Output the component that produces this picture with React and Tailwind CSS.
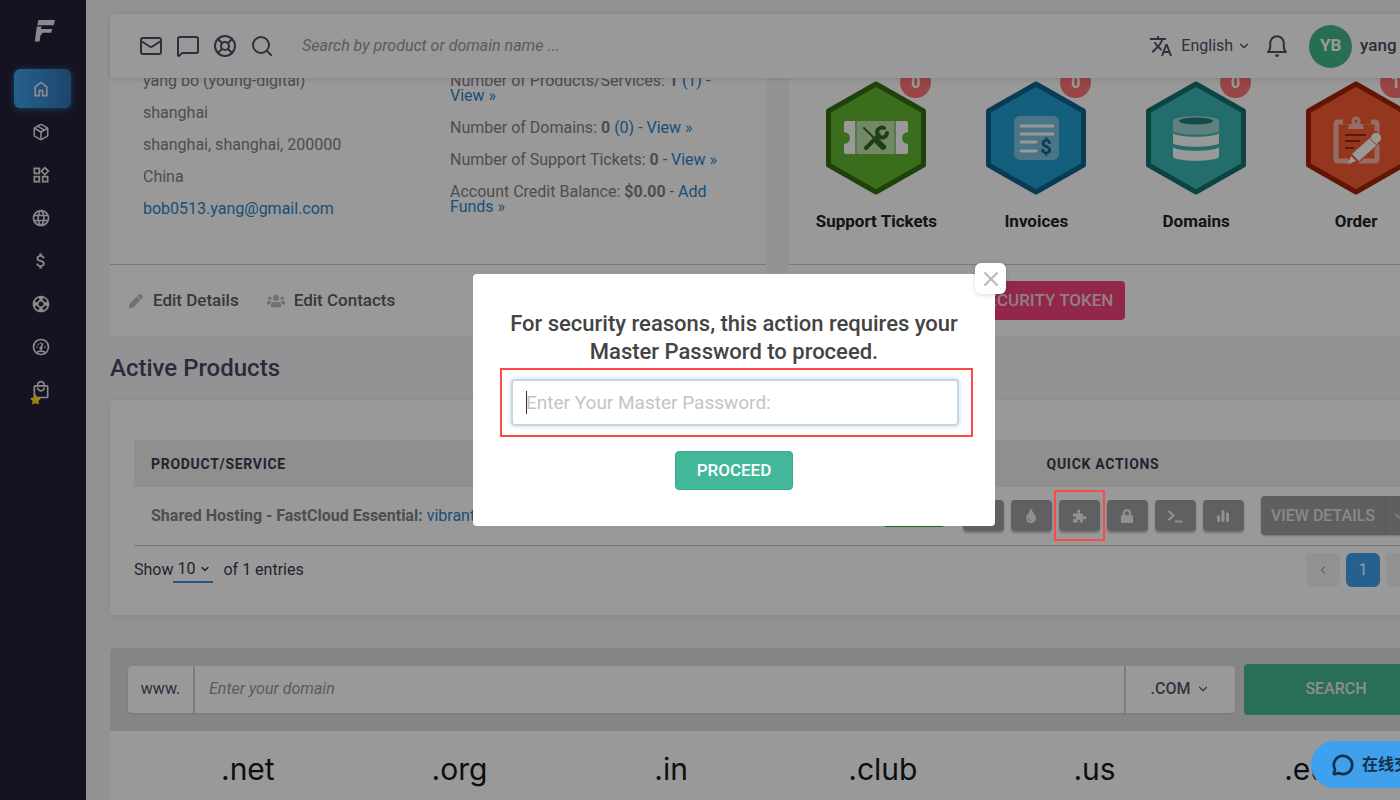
import React, { useState } from 'react';
import {
  ChevronDown,
  ChevronLeft,
  ChevronRight,
  LifeBuoy,
  Mail,
  MessageCircle,
  MessageSquare,
  Package,
  Search,
  X,
} from 'lucide-react';
import {
  MdAttachMoney,
  MdLanguage,
  MdOutlineLocalMall,
  MdOutlineSupport,
  MdOutlineWidgets,
  MdTranslate,
} from 'react-icons/md';
import { FaLock, FaPen, FaStar, FaTint, FaUsers } from 'react-icons/fa';

const HomeIcon = () => (
  <svg className="h-5 w-5" viewBox="0 -960 960 960" fill="currentColor">
    <path d="M240-200h120v-240h240v240h120v-360L480-740 240-560v360Zm-80 80v-480l320-240 320 240v480H520v-240h-80v240H160Z" />
  </svg>
);

const GaugeIcon = () => (
  <svg className="h-5 w-5" viewBox="0 0 24 24" fill="none" stroke="currentColor" strokeWidth="2">
    <circle cx="12" cy="12" r="9" />
    <path d="M7 18.500c2.500-2.200 7.500-2.200 10 0M12 13.500l2-6M6.500 12h1.500M16 12h1.500M8.200 8.200l1 1M11.500 6.500v1.500" />
    <circle cx="12" cy="13.500" r="1" fill="currentColor" />
  </svg>
);

const BellIcon = () => (
  <svg className="h-6 w-6" viewBox="0 0 24 24" fill="none" stroke="currentColor" strokeWidth="2" strokeLinejoin="round">
    <path d="M3 18h18c-1.600-1.300-2.200-2.800-2.200-5V9A6.800 6.800 0 0 0 5.200 9v4c0 2.200-.6 3.700-2.200 5z" />
    <path d="M9.500 20.500h5L12.800 23h-1.600z" fill="currentColor" stroke="none" />
  </svg>
);

const Logo = () => (
  <svg className="h-[22px] w-[22px]" viewBox="0 0 22 22" fill="currentColor">
    <path d="M4.500 0H21l-1.300 5.200H3.200zM2.800 6.600h4.800L6.900 9h11.300l-1 3.800H8.200l-.5 2H6.600L5.500 21.500H.8z" />
  </svg>
);

const Puzzle = () => (
  <svg className="h-4 w-4" viewBox="0 0 16 16" fill="currentColor">
    <path d="M2 5.500h4c.8 0 .9-.6.500-1.200C5.600 2.700 6.400 1.500 7.700 1.500s2.100 1.200 1.200 2.800c-.4.600-.3 1.200.5 1.200H12v2.600c0 .8.600.9 1.200.5 1.300-.8 2.300 0 2.300 1.200s-1 2-2.300 1.200c-.6-.4-1.200-.3-1.200.5v3H9.300c-.8 0-.8-.5-.5-1 .6-1.200 0-2-1-2s-1.700.8-1 2c.3.500.2 1-.5 1H2v-3c0-.7.500-.7 1-.4 1.200.6 2-.3 2-1.200s-.8-1.800-2-1.200c-.5.300-1 .2-1-.5z" />
  </svg>
);

const Terminal = () => (
  <svg className="h-4 w-4" viewBox="0 0 16 16" fill="none" stroke="currentColor" strokeWidth="2">
    <path d="M1.500 3l5 4.500-5 4.500M8 13.500h7.500" />
  </svg>
);

const Stats = () => (
  <svg className="h-4 w-4" viewBox="0 0 16 16" fill="currentColor">
    <rect x="2" y="7" width="3" height="7" rx="1.500" />
    <rect x="6.500" y="2" width="3" height="12" rx="1.500" />
    <rect x="11" y="4.500" width="3" height="9.500" rx="1.500" />
  </svg>
);

const Hexagon = ({ fill, edge, children }) => (
  <svg className="h-[114px] w-[102px]" viewBox="0 0 102 114">
    <path
      d="M51 3L98.500 30v54L51 111 3.500 84V30z"
      fill={fill}
      stroke={edge}
      strokeWidth="5"
      strokeLinejoin="round"
    />
    {children}
  </svg>
);

const TicketArt = () => (
  <Hexagon fill="#63b830" edge="#336f12">
    <path
      d="M21 40h60a2 2 0 0 1 2 2v9a6 6 0 0 0 0 12v8a2 2 0 0 1-2 2H21a2 2 0 0 1-2-2v-8a6 6 0 0 0 0-12v-9a2 2 0 0 1 2-2z"
      fill="#fff"
    />
    <path d="M30 40h41v33H30z" fill="#bfe3ab" />
    <path d="M31 40v33M70 40v33" stroke="#63b830" strokeWidth="1" />
    <g stroke="#33691e" fill="none" strokeLinecap="round">
      <path d="M39 47l13 13" strokeWidth="2" />
      <path d="M53 61l5 5" strokeWidth="6" />
      <path d="M41 67l13-13" strokeWidth="4" />
      <path d="M59 47a5 5 0 1 0 3 5" strokeWidth="4" />
    </g>
  </Hexagon>
);

const InvoiceArt = () => (
  <Hexagon fill="#209fd0" edge="#0d648d">
    <rect x="29" y="35" width="45" height="44" rx="6" fill="#7cc4e2" />
    <path d="M36 45h32M36 53h32M36 61h15M36 70h15" stroke="#fff" strokeWidth="3" strokeLinecap="round" />
    <text x="61" y="73" textAnchor="middle" fontSize="20" fontWeight="700" fill="#0d648d">
      $
    </text>
  </Hexagon>
);

const DomainArt = () => (
  <Hexagon fill="#3bb8b4" edge="#14726f">
    <path d="M28 41v9c4 5 42 5 46 0v-9z" fill="#9dd6d4" />
    <ellipse cx="51" cy="40" rx="23" ry="5" fill="#9dd6d4" />
    <ellipse cx="51" cy="40" rx="17" ry="3.500" fill="#1f7f7c" />
    <path d="M28 52c4 5 42 5 46 0v10c-4 5-42 5-46 0zM28 66c4 5 42 5 46 0v10c-4 5-42 5-46 0z" fill="#fff" />
  </Hexagon>
);

const OrderArt = () => (
  <Hexagon fill="#f95a33" edge="#a32408">
    <rect x="31" y="41" width="41" height="39" rx="2" fill="none" stroke="#f8b7a5" strokeWidth="5" />
    <path d="M38 37h28v6H38z" fill="#f95a33" />
    <path d="M43 48c0-4 3-5 4-6a4.500 4.500 0 1 1 8 0c1 1 4 2 4 6z" fill="#f8b7a5" />
    <circle cx="51" cy="40" r="1.500" fill="#f95a33" />
    <path d="M40 54h21M40 60h15M40 67h9" stroke="#a32408" strokeWidth="2" />
    <path d="M75 54L46 81" stroke="#f95a33" strokeWidth="12" />
    <path d="M66 56l7 7-19 17-7-7z" fill="#fff" />
    <circle cx="71" cy="57" r="5" fill="#fff" />
    <path d="M64.500 57l7 7" stroke="#f95a33" strokeWidth="1" />
    <path d="M46 75l5 5-8 3z" fill="#fff" />
  </Hexagon>
);

const menu = [
  { name: 'Home', icon: <HomeIcon /> },
  { name: 'Products', icon: <Package className="h-[18px] w-[18px]" /> },
  { name: 'Apps', icon: <MdOutlineWidgets className="h-5 w-5" /> },
  { name: 'Domains', icon: <MdLanguage className="h-5 w-5" /> },
  { name: 'Billing', icon: <MdAttachMoney className="h-5 w-5" /> },
  { name: 'Support', icon: <MdOutlineSupport className="h-5 w-5" /> },
  { name: 'Status', icon: <GaugeIcon /> },
  { name: 'Store', icon: <MdOutlineLocalMall className="h-5 w-5" />, starred: true },
];

const shortcuts = [
  { label: 'Support Tickets', count: 0, art: <TicketArt /> },
  { label: 'Invoices', count: 0, art: <InvoiceArt /> },
  { label: 'Domains', count: 0, art: <DomainArt /> },
  { label: 'Order', count: 1, art: <OrderArt /> },
];

const quickActions = [
  { name: 'Files', icon: null },
  { name: 'Cache', icon: <FaTint className="h-[14px] w-[14px]" /> },
  { name: 'Plugins', icon: <Puzzle />, marked: true },
  { name: 'Lock', icon: <FaLock className="h-[14px] w-[14px]" /> },
  { name: 'Terminal', icon: <Terminal /> },
  { name: 'Statistics', icon: <Stats /> },
];

const tlds = ['.net', '.org', '.in', '.club', '.us', '.eu'];

const Sidebar = () => (
  <aside className="w-[86px] shrink-0 bg-[#232137] text-[#e6e6ea]">
    <div className="flex h-[69px] items-center justify-center pb-2 pl-1">
      <Logo />
    </div>
    <nav className="flex flex-col gap-1 pl-[14px] pr-[15px]">
      {menu.map((item, index) => (
        <a
          key={item.name}
          href="#"
          aria-label={item.name}
          className={`relative flex h-[39px] items-center justify-center rounded-md pr-1 ${
            index === 0 ? 'bg-gradient-to-r from-[#40a0ee] to-[#2f76b3] shadow-[0_1px_6px_#2b6ca5]' : ''
          }`}
        >
          {item.icon}
          {item.starred && <FaStar className="absolute bottom-1 left-4 h-[11px] w-[11px] text-[#ffe11a]" />}
        </a>
      ))}
    </nav>
  </aside>
);

const Header = () => (
  <header className="absolute left-6 right-6 top-[14px] z-10 flex h-16 items-center rounded bg-white pl-[29px] pr-6 text-[#504d66] shadow-[0_1px_6px_rgba(0,0,0,0.14)]">
    <div className="flex gap-[13px]">
      <a href="#" aria-label="Mail"><Mail /></a>
      <a href="#" aria-label="Messages"><MessageSquare /></a>
      <a href="#" aria-label="Support"><LifeBuoy /></a>
      <a href="#" aria-label="Search"><Search /></a>
    </div>
    <input
      type="text"
      aria-label="Search"
      placeholder="Search by product or domain name ..."
      className="ml-7 min-w-0 flex-1 italic outline-none placeholder:text-[#98989d]"
    />
    <button className="flex items-center">
      <MdTranslate className="h-6 w-6" />
      <span className="ml-2">English</span>
      <ChevronDown className="ml-1 h-[14px] w-[14px]" />
    </button>
    <button aria-label="Notifications" className="ml-[14px]">
      <BellIcon />
    </button>
    <span className="ml-5 flex h-[43px] w-[43px] items-center justify-center rounded-full bg-[#43b78a] text-[17px] font-bold text-white">
      YB
    </span>
    <span className="ml-2 text-[17px] font-medium">yang bo</span>
  </header>
);

const AccountCard = () => (
  <section className="flex-1 bg-white text-[#7f8185]">
    <div className="flex h-[240px] border-b border-[#c8c8ca] pl-[33px] pt-12 leading-[15px]">
      <div className="flex w-[307px] flex-col gap-[17px]">
        <p>yang bo (young-digital)</p>
        <p>shanghai</p>
        <p>shanghai, shanghai, 200000</p>
        <p>China</p>
        <a href="#" className="text-[#2d84c9]">bob0513.yang@gmail.com</a>
      </div>
      <div className="flex flex-col gap-[17px]">
        <p>
          Number of Products/Services: <b>1</b> <a href="#" className="text-[#2d84c9]">(1) -<br />View »</a>
        </p>
        <p>
          Number of Domains: <b>0</b> <a href="#" className="text-[#2d84c9]">(0) - View »</a>
        </p>
        <p>
          Number of Support Tickets: <b>0</b> <a href="#" className="text-[#2d84c9]">- View »</a>
        </p>
        <p>
          Account Credit Balance: <b>$0.00</b> <a href="#" className="text-[#2d84c9]">- Add<br />Funds »</a>
        </p>
      </div>
    </div>
    <div className="flex h-[71px] items-center gap-7 pl-[19px] text-[17px] font-medium text-[#5e5e60]">
      <a href="#" className="flex items-center gap-[10px]">
        <FaPen className="h-[14px] w-[14px] text-[#bcbcbe]" />
        Edit Details
      </a>
      <a href="#" className="flex items-center gap-[9px]">
        <FaUsers className="h-[18px] w-[18px] text-[#bcbcbe]" />
        Edit Contacts
      </a>
    </div>
  </section>
);

const ShortcutsCard = () => (
  <section className="flex-1 bg-white">
    <div className="grid h-[240px] grid-cols-4 border-b border-[#c8c8ca] px-2 pt-14">
      {shortcuts.map((item) => (
        <a key={item.label} href="#" className="flex flex-col items-center gap-[14px] text-[17px] font-bold text-[#202226]">
          <span className="relative">
            {item.art}
            <span className="absolute -right-1 -top-[14px] flex h-[31px] w-[31px] items-center justify-center rounded-full bg-[#ff7275] text-base text-white">
              {item.count}
            </span>
          </span>
          <span className="whitespace-nowrap">{item.label}</span>
        </a>
      ))}
    </div>
    <div className="flex h-[71px] items-center pl-[141px]">
      <button className="h-[39px] rounded-sm bg-[#f5427b] px-3 text-[17px] font-medium text-[#f0d5de]">
        GET SECURITY TOKEN
      </button>
    </div>
  </section>
);

const ProductsCard = () => (
  <section className="rounded bg-white px-6 pb-7 pt-10 shadow-[0_2px_12px_rgba(0,0,0,0.08)]">
    <table className="w-full table-fixed">
      <thead>
        <tr className="h-[47px] bg-[#efeff1] text-sm tracking-wider text-[#3b3950]">
          <th className="pl-[17px] text-left font-bold">PRODUCT/SERVICE</th>
          <th className="w-[78px]" aria-label="Status"></th>
          <th className="w-[300px] font-bold">QUICK ACTIONS</th>
          <th className="w-[167px]" aria-label="Details"></th>
        </tr>
      </thead>
      <tbody>
        <tr className="h-[58px] border-b border-[#c8c8ca]">
          <td className="truncate pl-[17px]">
            <b className="text-[#808285]">Shared Hosting - FastCloud Essential:</b>{' '}
            <a href="#" className="text-[#2d84c9]">vibrantcloud.net</a>
          </td>
          <td className="pl-2">
            <span className="block h-[23px] w-[62px] rounded bg-[#2aa838] text-center text-sm text-white">Active</span>
          </td>
          <td>
            <div className="flex justify-center gap-[7px]">
              {quickActions.map((action) => (
                <button
                  key={action.name}
                  aria-label={action.name}
                  className="relative flex h-[31px] w-[41px] items-center justify-center rounded bg-[#a0a1a3] text-[#f2f2f2] shadow-[0_2px_2px_rgba(0,0,0,0.25)]"
                >
                  {action.icon}
                  {action.marked && (
                    <span className="absolute -inset-x-[5px] -inset-y-[10px] z-40 border-2 border-[#ff4848]"></span>
                  )}
                </button>
              ))}
            </div>
          </td>
          <td className="pl-2">
            <div className="flex h-[39px] w-[151px] rounded bg-[#9e9fa1] font-medium text-[#e4e4e6] shadow-[0_1px_2px_rgba(0,0,0,0.25)]">
              <button className="w-[125px] border-r border-[#8f9092]">VIEW DETAILS</button>
              <button aria-label="More" className="flex w-[26px] items-center justify-center">
                <ChevronDown className="h-[14px] w-[14px]" />
              </button>
            </div>
          </td>
        </tr>
      </tbody>
    </table>
    <div className="flex items-center justify-between pt-[7px] text-[#3b3950]">
      <div className="flex items-center">
        <label htmlFor="page-size">Show</label>
        <span className="relative mr-[10px] flex items-center border-b-2 border-[#4090d8]">
          <select id="page-size" className="h-6 w-10 appearance-none pl-1 outline-none" defaultValue="10">
            <option>10</option>
            <option>25</option>
          </select>
          <ChevronDown className="pointer-events-none absolute right-[2px] h-3 w-3" strokeWidth={3} />
        </span>
        <span>of 1 entries</span>
      </div>
      <div className="flex gap-[6px]">
        <button aria-label="Previous" className="flex h-[34px] w-[34px] items-center justify-center rounded-md bg-[#f3f3f4] text-[#b0b0b4]">
          <ChevronLeft className="h-3 w-3" strokeWidth={3} />
        </button>
        <button className="h-[34px] w-[34px] rounded-md bg-[#40a0ee] text-white">1</button>
        <button aria-label="Next" className="flex h-[34px] w-[34px] items-center justify-center rounded-md bg-[#f3f3f4] text-[#b0b0b4]">
          <ChevronRight className="h-3 w-3" strokeWidth={3} />
        </button>
      </div>
    </div>
  </section>
);

const DomainSearch = () => (
  <section className="mt-[33px] rounded-t bg-white">
    <form className="flex h-[83px] items-center gap-[9px] rounded-t bg-[#dedee1] pl-[18px] pr-4" onSubmit={(e) => e.preventDefault()}>
      <div className="flex h-[47px] flex-1 rounded bg-white shadow-[0_1px_2px_rgba(0,0,0,0.1)]">
        <label htmlFor="domain" className="flex w-[67px] items-center justify-center border-r-2 border-[#d0d0d3] text-[#4e4c60]">
          www.
        </label>
        <input id="domain" type="text" placeholder="Enter your domain" className="min-w-0 flex-1 px-[14px] italic outline-none placeholder:text-[#98989d]" />
        <button type="button" className="flex w-[111px] items-center justify-center gap-[6px] border-l-2 border-[#d0d0d3] font-medium text-[#5a586c]">
          .COM
          <ChevronDown className="h-[14px] w-[14px]" />
        </button>
      </div>
      <button type="submit" className="h-[51px] w-[184px] rounded bg-[#43b795] font-medium text-[#e4eeea]">
        SEARCH
      </button>
    </form>
    <div className="grid grid-cols-6 px-8 py-[14px] font-[Inter,sans-serif] text-[30px] leading-[48px] text-[#16181c]">
      {tlds.map((tld) => (
        <span key={tld} className="text-center">{tld}</span>
      ))}
    </div>
  </section>
);

const PasswordDialog = ({ onClose }) => {
  const [password, setPassword] = useState('');

  return (
    <div className="absolute inset-0 z-20 flex items-center justify-center bg-black/40">
      <form
        role="dialog"
        aria-modal="true"
        className="relative flex w-[522px] flex-col items-center rounded bg-white px-[27px] pb-9 pt-9"
        onSubmit={(e) => e.preventDefault()}
      >
        <button
          type="button"
          aria-label="Close"
          onClick={onClose}
          className="absolute -right-[11px] -top-[11px] flex h-[31px] w-[31px] items-center justify-center rounded-md bg-white text-[#b8b8b8] shadow-[0_1px_5px_rgba(0,0,0,0.15)]"
        >
          <X className="h-6 w-6" />
        </button>
        <h2 className="text-center text-[22px] font-medium leading-7 text-[#444]">
          For security reasons, this action requires your
          <br />
          Master Password to proceed.
        </h2>
        <div className="relative mt-[2px] w-[473px] self-start border-2 border-[#ff4848] py-[9px] pl-[9px] pr-3">
          <input
            type="password"
            autoFocus
            aria-label="Master Password"
            placeholder="Enter Your Master Password:"
            value={password}
            onChange={(e) => setPassword(e.target.value)}
            className={`block h-[47px] w-full rounded-sm border-2 border-[#c8d4de] px-[13px] text-[19px] text-[#444] shadow-[0_0_3px_2px_#e2ecf8] outline-none placeholder:text-[#c4c4c4] ${
              password ? '' : 'caret-transparent'
            }`}
          />
          {/* thin full-height caret while the field is empty */}
          {!password && <span className="pointer-events-none absolute left-6 top-[21px] h-[23px] w-px bg-[#333]"></span>}
        </div>
        <button type="submit" className="mt-[14px] h-[39px] w-[118px] rounded-sm border border-[#38a98c] bg-[#43b79a] text-[17px] font-medium text-white">
          PROCEED
        </button>
      </form>
    </div>
  );
};

const App = () => {
  const [dialogOpen, setDialogOpen] = useState(true);

  return (
    <div className="h-screen overflow-hidden font-[Roboto,'Noto_Sans_CJK_SC',sans-serif] text-base">
      <div className="relative -mr-[68px] flex h-full bg-[#f6f6f9]">
        <Sidebar />
        <main className="relative min-w-0 flex-1 overflow-hidden px-6 pt-[25px]">
          <Header />
          <div className="flex gap-[23px]">
            <AccountCard />
            <ShortcutsCard />
          </div>
          <h1 className="flex h-16 items-center text-2xl font-medium text-[#4a4762]">Active Products</h1>
          <ProductsCard />
          <DomainSearch />
        </main>
        {dialogOpen && <PasswordDialog onClose={() => setDialogOpen(false)} />}
        <button className="absolute bottom-3 right-6 z-40 flex h-[47px] w-[133px] items-center gap-2 rounded-full bg-[#3fa0ee] pl-[21px] font-bold text-[#14304a]">
          <MessageCircle className="h-[22px] w-[22px]" strokeWidth={3} />
          <span className="whitespace-nowrap">在线交谈</span>
        </button>
      </div>
    </div>
  );
};

export default App;
